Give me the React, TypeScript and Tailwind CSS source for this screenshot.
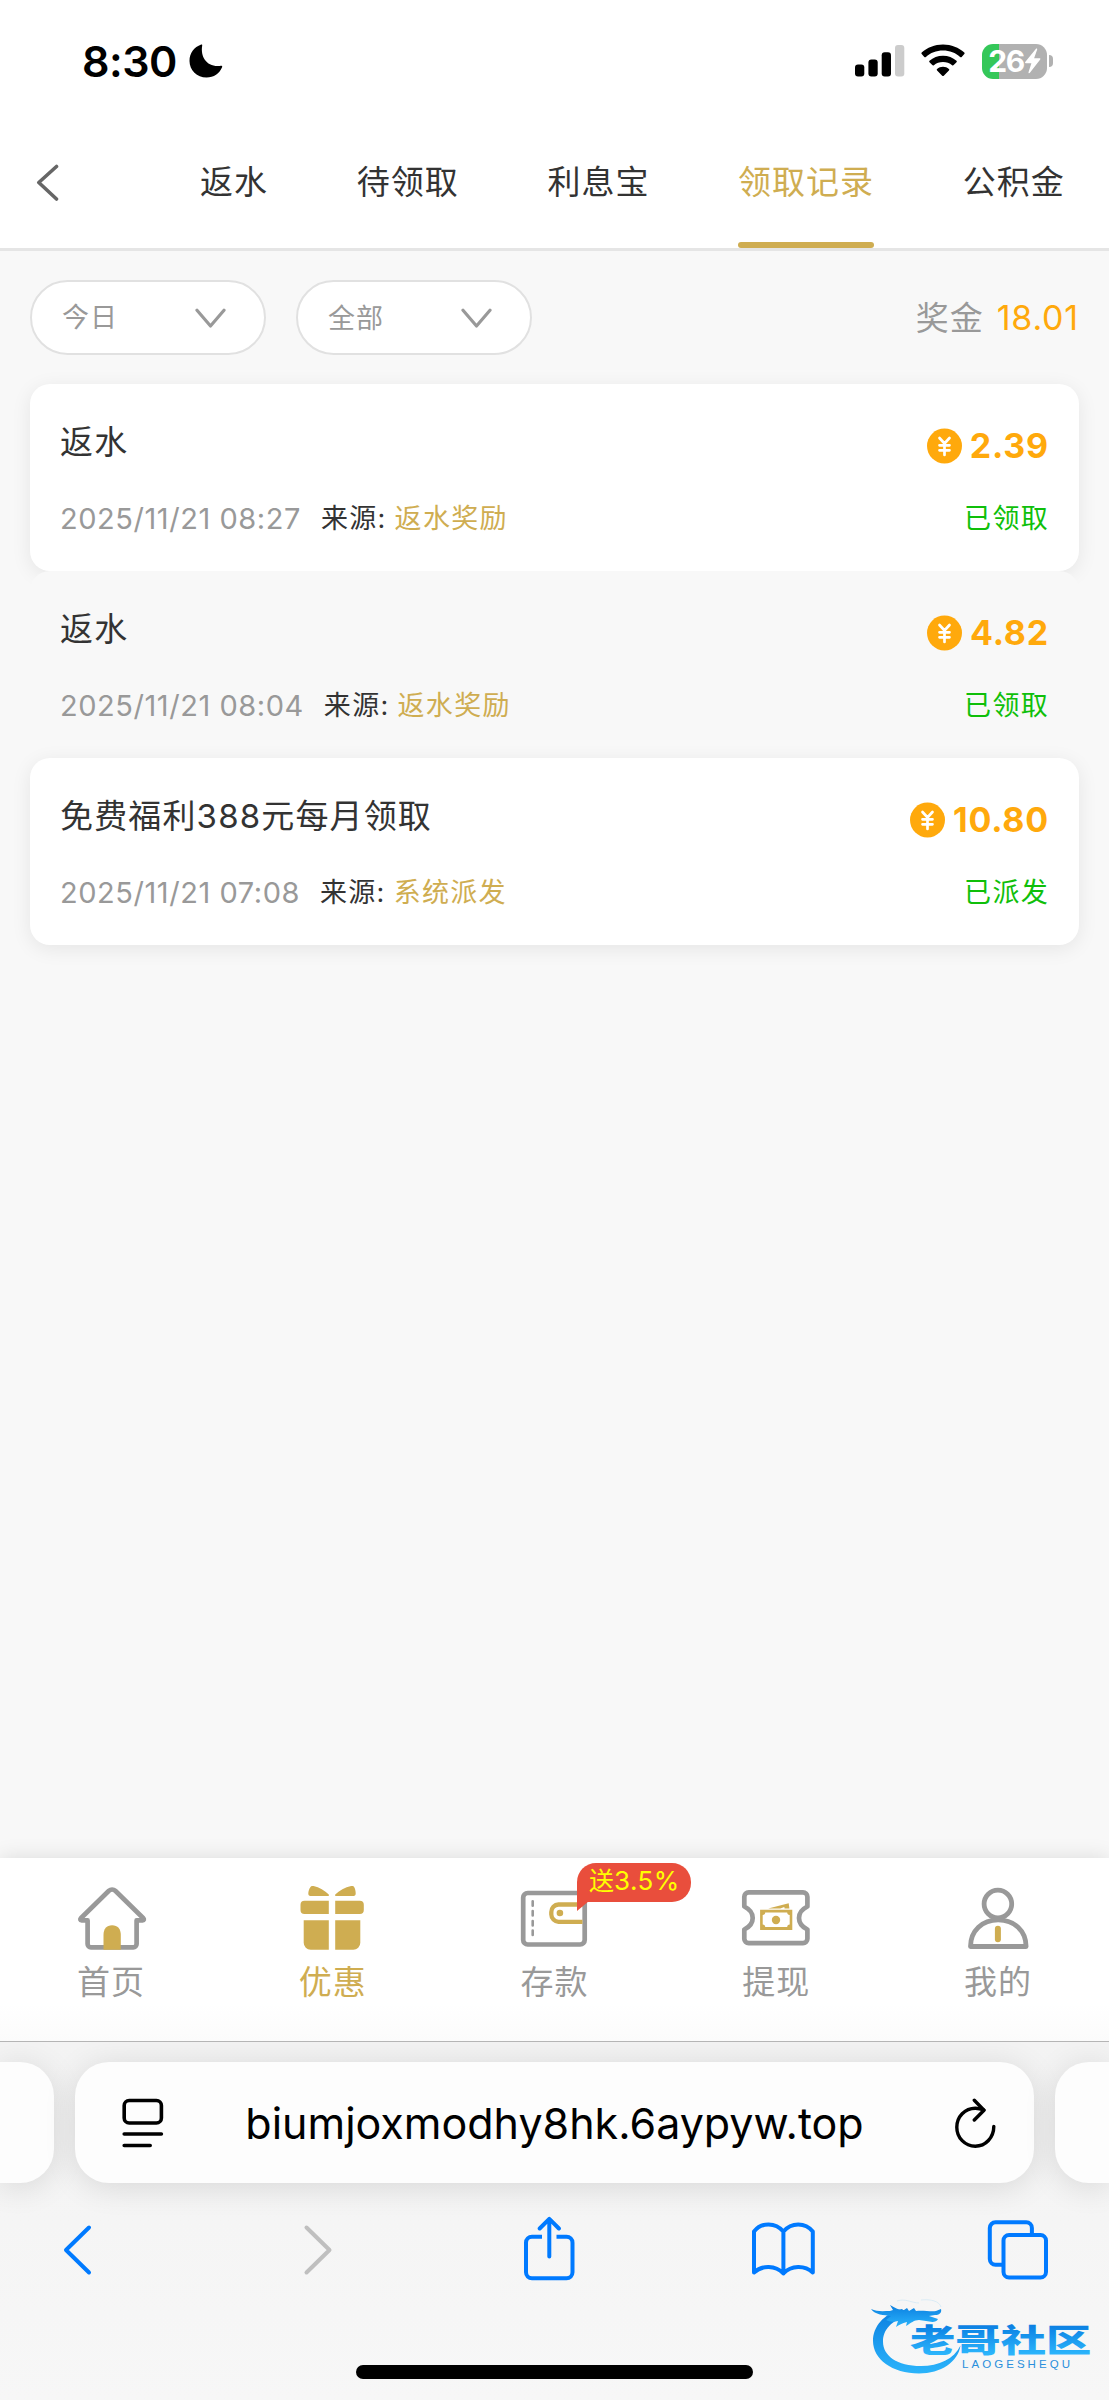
import type { ReactNode } from "react";

const tabs = ["返水", "待领取", "利息宝", "领取记录", "公积金"];
const activeTab = "领取记录";

const records = [
  { title: "返水", time: "2025/11/21 08:27", source: "返水奖励", amount: "2.39", status: "已领取" },
  { title: "返水", time: "2025/11/21 08:04", source: "返水奖励", amount: "4.82", status: "已领取" },
  { title: "免费福利388元每月领取", time: "2025/11/21 07:08", source: "系统派发", amount: "10.80", status: "已派发" },
];

function StatusBar() {
  return (
    <div className="flex h-[122px] shrink-0 items-center justify-between pl-[82px] pr-[56px]">
      <div className="flex items-center">
        <span className="w-[107px] text-[43px] leading-[44px] font-semibold tracking-[-0.5px] text-black">8:30</span>
        <svg className="h-[34px] w-[34px]" viewBox="0 0 34 34" fill="#000">
          <path d="M12.2 .6c.6-.3 1.200 .2 1 .9C11.200 13 18 23.800 32 21.800c.9-.1 1.500 .5 1.200 1.300C30.500 29.800 24.800 33.500 17.500 33.500 8 33.500 .5 26.200 .5 17 .5 9.300 5 3.200 12.200 .6z" />
        </svg>
      </div>
      <div className="flex items-center">
        <svg className="h-[34px] w-[50px]" viewBox="0 0 50 34">
          <rect x="0" y="20.500" width="9.300" height="12" rx="3" />
          <rect x="13.400" y="15.500" width="9.300" height="17" rx="3" />
          <rect x="26.700" y="8.200" width="9.300" height="24.300" rx="3" />
          <rect x="40" y="1" width="9.300" height="31.500" rx="3" fill="#cccccc" />
        </svg>
        <svg className="ml-4 h-[34px] w-[44px]" viewBox="0 0 44 34">
          <path d="M22 .5c8.300 0 15.800 3 21.300 8 .5.500.5 1.100 0 1.600l-2.600 2.800c-.5.500-1.100.500-1.600 0C34.600 9 28.700 6.600 22 6.600S9.400 9 4.900 12.900c-.5.500-1.100.500-1.600 0L.7 10.100c-.5-.5-.5-1.100 0-1.600C6.200 3.500 13.700.5 22 .5z" />
          <path d="M22 11.700c5.200 0 9.900 1.900 13.500 5 .5.500.5 1.100 0 1.600l-2.800 2.800c-.5.500-1 .5-1.600.1-2.500-2-5.600-3.200-9.100-3.200s-6.600 1.200-9.100 3.200c-.6.4-1.100.4-1.600-.1l-2.800-2.800c-.5-.5-.5-1.100 0-1.600 3.600-3.100 8.300-5 13.500-5z" />
          <path d="M22 22.800c2.200 0 4.300.8 5.900 2.100.5.400.5 1 0 1.500l-5.100 5.300c-.5.500-1.100.5-1.600 0l-5.100-5.300c-.5-.5-.5-1.100 0-1.500 1.600-1.300 3.700-2.100 5.900-2.100z" />
        </svg>
        <div className="ml-[17px] flex h-[35px] w-[65px] items-center justify-center rounded-[11px] bg-linear-to-r from-[#34c759] from-[26%] to-[#b1b1b1] to-[26%] text-white">
          <span className="text-[30px] leading-[35px] font-bold tracking-[-1.500px]">26</span>
          <svg className="h-[26px] w-[17px]" viewBox="0 0 17 26" fill="currentColor">
            <path d="M11.800 .9 1.200 14c-.4.600-.1 1.200.5 1.200h5.700L4.600 24c-.4 1.200.5 1.700 1.300.8L16.200 11.500c.4-.6.1-1.200-.5-1.200h-5.600L13.100 1.700c.4-1.200-.5-1.700-1.300-.8z" />
          </svg>
        </div>
        <div className="ml-[2px] h-[12px] w-[4px] rounded-r-full bg-[#b1b1b1]" />
      </div>
    </div>
  );
}

function TabHeader() {
  return (
    <header className="flex h-[129px] shrink-0 items-stretch border-b-[3px] border-[#e5e5e5] pl-[36px]">
      <svg className="mt-[42px] h-[37px] w-[24px]" viewBox="0 0 24 37" fill="none" stroke="#666" strokeWidth="3.600" strokeLinecap="round" strokeLinejoin="round">
        <path d="M20.500 2.500 2.800 18.500 20.500 35" />
      </svg>
      <nav className="ml-[140px] flex gap-[88.700px]">
        {tabs.map((tab) => (
          <div
            key={tab}
            className={`flex flex-col justify-between text-[33px] leading-[48px] tracking-[1px] whitespace-nowrap ${tab === activeTab ? "text-[#cfad51]" : "text-[#333]"}`}
          >
            <span className="mt-[36px]">{tab}</span>
            {tab === activeTab && <span className="h-[6px] rounded-full bg-[#cfad51]" />}
          </div>
        ))}
      </nav>
    </header>
  );
}

function Select({ label, className }: { label: string; className?: string }) {
  return (
    <div className="flex h-[75px] w-[236px] items-center justify-between rounded-full border-2 border-[#e1e1e1] bg-white pr-[38px] pl-[30px]">
      <span className={`text-[27px] leading-[40px] tracking-[1px] text-[#999] ${className ?? ""}`}>{label}</span>
      <svg className="h-[20px] w-[31px]" viewBox="0 0 31 20" fill="none" stroke="#999" strokeWidth="3.200" strokeLinecap="round" strokeLinejoin="round">
        <path d="M2 2.300 15.500 18 29 2.300" />
      </svg>
    </div>
  );
}

function CoinIcon() {
  return (
    <svg className="h-[36px] w-[35px]" viewBox="0 0 35 35">
      <circle cx="17.500" cy="17.500" r="17.500" fill="#ffa90c" />
      <path d="M12.500 9.500 17.500 15l5-5.500M12.500 16.800h10M12.500 21.800h10M17.500 15v11.500" fill="none" stroke="#fff" strokeWidth="2.700" strokeLinecap="round" />
    </svg>
  );
}

function RecordList() {
  return (
    <div className="mt-[29px] px-[30px]">
      {records.map((r, i) => (
        <div
          key={r.time}
          className={`relative h-[187px] rounded-[20px] px-[30px] ${i % 2 === 0 ? "bg-white shadow-[0_4px_20px_rgba(0,0,0,0.08)]" : "bg-[#f8f8f8]"}`}
        >
          <div className="flex items-start justify-between pt-[34px] leading-[48px]">
            <span className="text-[33px] tracking-[1.150px] text-[#333]">{r.title}</span>
            <span className="mt-[4px] flex items-center gap-2 text-[34px] font-bold tracking-[0.8px] text-[#ffa90c]">
              <CoinIcon />
              {r.amount}
            </span>
          </div>
          <div className="mt-[29px] flex items-center text-[27px] leading-[40px] tracking-[1.300px]">
            <span className="mr-[20px] text-[29px] tracking-[0.550px] text-[#999]">{r.time}</span>
            <span className="text-[#333]">来源:</span>
            <span className="ml-[8px] text-[#cfad51]">{r.source}</span>
            <span className="ml-auto text-[#0fbf0a]">{r.status}</span>
          </div>
        </div>
      ))}
    </div>
  );
}

const HomeIcon = () => (
  <svg className="h-[66px] w-[72px]" viewBox="-1.1 0 72 66" fill="none" stroke="#999" strokeWidth="4.700" strokeLinejoin="round">
    <path d="M32.800 4.800c1.900-1.700 4.500-1.700 6.400 0L67 32c1.300 1.300.9 2.400-.5 2.400h-6V58a3.300 3.300 0 0 1-3.300 3.300H14.800A3.300 3.300 0 0 1 11.500 58V34.400h-6c-1.400 0-1.800-1.100-.5-2.400z" />
    <path d="M27.400 63.700V49c0-6 3-9.700 8.600-9.700s8.700 3.700 8.700 9.700v14.700z" fill="#cfad51" stroke="none" />
  </svg>
);

const GiftIcon = () => (
  <svg className="h-[66px] w-[72px]" viewBox="-3.3 0 72 66" fill="#cfad51">
    <path d="M28.500 10H10.200C8.600 10 8 9 8 7.600 8 5 9 2.500 10.200.9c.7-.9 1.700-1.100 3-.8C19 1.500 24.500 4.500 28.500 8.600zM34.900 10h18.300c1.600 0 2.200-1 2.200-2.400 0-2.600-.6-5.100-1.600-6.700-.6-.9-1.700-1.100-3-.8-6 1.400-11.900 4.400-15.900 8.500z" />
    <path d="M28.500 14.700V28H4.200a4 4 0 0 1-4-4v-5.300a4 4 0 0 1 4-4zM34.900 14.700V28h24.600a4 4 0 0 0 4-4v-5.300a4 4 0 0 0-4-4z" />
    <path d="M28.500 34.300v29.400H10.400a7 7 0 0 1-7-7V34.300zM34.900 34.300v29.400H53a7 7 0 0 0 7-7V34.300z" />
  </svg>
);

const WalletIcon = () => (
  <svg className="h-[66px] w-[72px]" viewBox="-1.5 -4 72 66" fill="none">
    <rect x="3.700" y="3" width="61.500" height="51.500" rx="4.500" stroke="#999" strokeWidth="4.700" />
    <path d="M13.200 11.200v4.500M13.200 21v4.500M13.200 31v4.500M13.200 40.500V45" stroke="#999" strokeWidth="2.600" strokeLinecap="round" />
    <path d="M63 14.500H39a7.500 7.500 0 0 0-7.200 7.500v2.500A7.500 7.500 0 0 0 39 31.800h24" stroke="#cfad51" strokeWidth="4.300" />
    <circle cx="40.400" cy="23" r="3.300" fill="#cfad51" />
  </svg>
);

const TicketIcon = () => (
  <svg className="h-[66px] w-[72px]" viewBox="-0.7 -3 72 66" fill="none">
    <path
      d="M8 3.300h54.300a4.400 4.400 0 0 1 4.400 4.400v9.800C55.500 23 55.500 35 66.700 40.500v9.200a4.400 4.400 0 0 1-4.400 4.400H8a4.400 4.400 0 0 1-4.400-4.400v-9.200C14.800 35 14.800 23 3.600 17.500V7.700A4.400 4.400 0 0 1 8 3.300z"
      stroke="#999"
      strokeWidth="4.700"
      strokeLinejoin="round"
    />
    <path d="M19.400 20.700h32.200V41H19.400zM24.500 23.500c0 1.600-.9 2.500-2.500 2.500v9.500c1.600 0 2.500.9 2.500 2.500h22c0-1.600.9-2.500 2.500-2.500V26c-1.600 0-2.500-.9-2.500-2.500z" fill="#cfad51" fillRule="evenodd" />
    <circle cx="35.300" cy="31" r="4.200" fill="#cfad51" />
    <path d="M27.500 19.600 48 14.200l.7 5.400h-4.800l-.3-1.600-4 1.600z" fill="#cfad51" />
  </svg>
);

const UserIcon = () => (
  <svg className="h-[66px] w-[72px]" viewBox="-4.9 -1 72 66" fill="none" stroke="#999" strokeWidth="4.800" strokeLinejoin="round">
    <circle cx="31" cy="17" r="13.800" />
    <path d="M3.600 59.500C3.600 43.500 15.500 32.800 31.300 32.800S59.200 43.500 59.200 59.500z" />
    <path d="M31 41.700v10.600" stroke="#cfad51" strokeWidth="6" strokeLinecap="round" />
  </svg>
);

const navItems: { label: string; icon: ReactNode; active?: boolean; badge?: string }[] = [
  { label: "首页", icon: <HomeIcon /> },
  { label: "优惠", icon: <GiftIcon />, active: true },
  { label: "存款", icon: <WalletIcon />, badge: "3.5%" },
  { label: "提现", icon: <TicketIcon /> },
  { label: "我的", icon: <UserIcon /> },
];

function BottomNav() {
  return (
    <nav className="mt-auto grid h-[184px] shrink-0 grid-cols-5 border-b border-[#b5b5b5] bg-linear-to-b from-white from-80% to-[#fbfbfb] shadow-[0_0_20px_rgba(0,0,0,0.12)]">
      {navItems.map((item) => (
        <div key={item.label} className="relative flex flex-col items-center pt-[28px]">
          {item.icon}
          <span className={`mt-[6px] text-[33px] leading-[48px] tracking-[1px] ${item.active ? "text-[#cfad51]" : "text-[#999]"}`}>{item.label}</span>
          {item.badge && (
            <div className="absolute top-[5px] left-[133.500px] flex h-[39px] w-[114px] items-center rounded-[19px] rounded-bl-none bg-[#e94e3c] pl-[12px] text-[25px] leading-[37px] whitespace-nowrap text-[#ffff00]">
              <span className="mb-[3px]">
                送<span className="text-[26px] tracking-[0.400px]">{item.badge}</span>
              </span>
              <svg className="absolute top-[38px] left-0 h-[10px] w-[12px]" viewBox="0 0 12 10">
                <path d="M0 0h12L0 10z" fill="#e94e3c" />
              </svg>
            </div>
          )}
        </div>
      ))}
    </nav>
  );
}

function AddressBar() {
  return (
    <div className="mt-[20px] flex h-[121px] justify-between">
      <div className="w-[54px] rounded-r-[34px] bg-[#fdfdfd] shadow-[0_4px_32px_rgba(0,0,0,0.12)]" />
      <div className="flex w-[959px] items-center rounded-[34px] bg-[#fdfdfd] pr-[37px] pl-[47px] shadow-[0_4px_32px_rgba(0,0,0,0.12)]">
        <svg className="h-[50px] w-[42px]" viewBox="0 0 42 50" fill="none" stroke="#000" strokeWidth="3.600" strokeLinecap="round">
          <rect x="2.200" y="2.500" width="37.200" height="22.500" rx="5" />
          <path d="M2.200 36h37.200M2.200 47.500h26" />
        </svg>
        <span className="flex-1 pr-[9px] text-center text-[43px] leading-[56px] text-black">biumjoxmodhy8hk.6aypyw.top</span>
        <svg className="h-[50px] w-[43px]" viewBox="0 0 43 50" fill="none" stroke="#000" strokeWidth="3.400" strokeLinecap="round" strokeLinejoin="round">
          <path d="M39.800 28.500c0 11-8.200 19.700-18.500 19.700S2.800 39.800 2.800 29.200 11 10.200 21.300 10.200c3 0 6 .7 8.500 1.800" />
          <path d="M20.300 2.300 30 12.200 20.300 22" />
        </svg>
      </div>
      <div className="w-[54px] rounded-l-[34px] bg-[#fdfdfd] shadow-[0_4px_32px_rgba(0,0,0,0.12)]" />
    </div>
  );
}

function Toolbar() {
  return (
    <div className="mt-[32px] flex h-[66px] items-center pl-[62px] text-[#007aff] [&_svg]:fill-none [&_svg]:stroke-current [&_svg]:stroke-[4]">
      <svg className="mt-[4px] h-[52px] w-[30px]" viewBox="0 0 30 52" strokeLinecap="round" strokeLinejoin="round">
        <path d="M27 3.500 4 26 27 48.500" />
      </svg>
      <svg className="mt-[4px] ml-[211px] h-[52px] w-[30px] text-[#bfbfbf]" viewBox="0 0 30 52" strokeLinecap="round" strokeLinejoin="round">
        <path d="M3.500 3.500 26.500 26 3.500 48.500" />
      </svg>
      <svg className="mt-[2px] ml-[190px] h-[66px] w-[53px]" viewBox="0 0 53 66">
        <path d="M19 20.700H9a6 6 0 0 0-6 6v29.600a6 6 0 0 0 6 6h34.500a6 6 0 0 0 6-6V26.700a6 6 0 0 0-6-6h-10" />
        <path d="M26.300 3.500v37M16.700 12.500l9.600-9.700 9.600 9.700" strokeLinecap="round" strokeLinejoin="round" />
      </svg>
      <svg className="mt-[2px] ml-[175px] h-[56px] w-[65px]" viewBox="0 0 65 56" strokeLinecap="round" strokeLinejoin="round">
        <path d="M32.400 10.500C24.500 1 10.500 1 3 10.500v41c8-7.500 21.500-7.500 29.400 1 7.900-8.500 21.400-8.500 29.400-1v-41C54.300 1 40.300 1 32.400 10.500zM32.400 10.500v42" />
      </svg>
      <svg className="mt-[4px] ml-[170px] h-[62px] w-[64px]" viewBox="0 0 64 62">
        <rect x="17.500" y="16" width="42.500" height="42.500" rx="5.500" />
        <path d="M45.900 16V9a5.700 5.700 0 0 0-5.700-5.700H9.500A5.700 5.700 0 0 0 3.800 9v31a5.700 5.700 0 0 0 5.700 5.700h8" />
      </svg>
    </div>
  );
}

function Watermark() {
  return (
    <svg className="absolute right-[12px] bottom-[26px] h-[78px] w-[228px]" viewBox="0 0 228 78">
      <defs>
        <linearGradient id="dragon" x1="0" y1="0" x2="0" y2="1">
          <stop offset="0" stopColor="#0b7fe0" />
          <stop offset="1" stopColor="#2bb4fb" />
        </linearGradient>
        <linearGradient id="name" x1="0" y1="0" x2="0" y2="1">
          <stop offset="0.2" stopColor="#0a7ee2" />
          <stop offset="0.85" stopColor="#2bb4fb" />
        </linearGradient>
      </defs>
      <g fill="url(#dragon)">
        <path d="M33 13C14 18 4 31 4 45c0 18 19 32.500 46 32.500 22 0 39-11.500 41.500-28C85 63 70 70 52 70 28 70 14 60 14 45.500 14 34 22 24 40 20z" />
        <path d="M2 13c6 3 13 2 19 2l3-1-3-5c5 3 9 5 14 5l3-2 2 3 5-3 2 3c7-1 15 1 20 0l5-2c1 4-2 6-6 6l-6 1 9 3c-2 4-7 3-12 2l-7-1c-5 0-8 3-13 6l1-4c-5 1-8 3-11 5l2-6c-4 1-8 1-12-1l5-4C15 19 6 19 2 13z" />
      </g>
      <path d="M28 5c8-3 15 2 22 2M52 4c10-1 18 1 20 7" fill="none" stroke="#cfe6f5" strokeWidth=".7" />
      <text transform="translate(41 55.500) scale(1.440 1)" fontSize="31.500" fontWeight="900" fill="url(#name)" fontFamily="Noto Sans CJK SC, sans-serif">
        老哥社区
      </text>
      <text x="93" y="71.500" fontSize="11.500" textLength="108" fill="#2a8fdc" fontFamily="Liberation Sans, sans-serif">
        LAOGESHEQU
      </text>
    </svg>
  );
}

export default function App() {
  return (
    <div className="relative flex h-[2400px] w-[1109px] flex-col overflow-hidden bg-white font-['Inter','Noto_Sans_CJK_SC',sans-serif]">
      <StatusBar />
      <TabHeader />
      <main className="flex flex-1 flex-col bg-[#f8f8f8]">
        <div className="mt-[29px] flex items-center gap-[30px] px-[30px]">
          <Select label="今日" />
          <Select label="全部" className="mt-[3px]" />
          <div className="ml-auto flex items-center text-[33px] leading-[48px] tracking-[1px] text-[#999]">
            奖金<span className="ml-[13px] text-[34px] tracking-[0.800px] text-[#ffa90c]">18.01</span>
          </div>
        </div>
        <RecordList />
        <BottomNav />
      </main>
      <footer className="h-[358px] shrink-0 overflow-hidden bg-linear-to-b from-[#f3f3f3] to-[#f7f7f7]">
        <AddressBar />
        <Toolbar />
        <div className="mx-auto mt-[84px] h-[14px] w-[397px] rounded-full bg-black" />
      </footer>
      <Watermark />
    </div>
  );
}
